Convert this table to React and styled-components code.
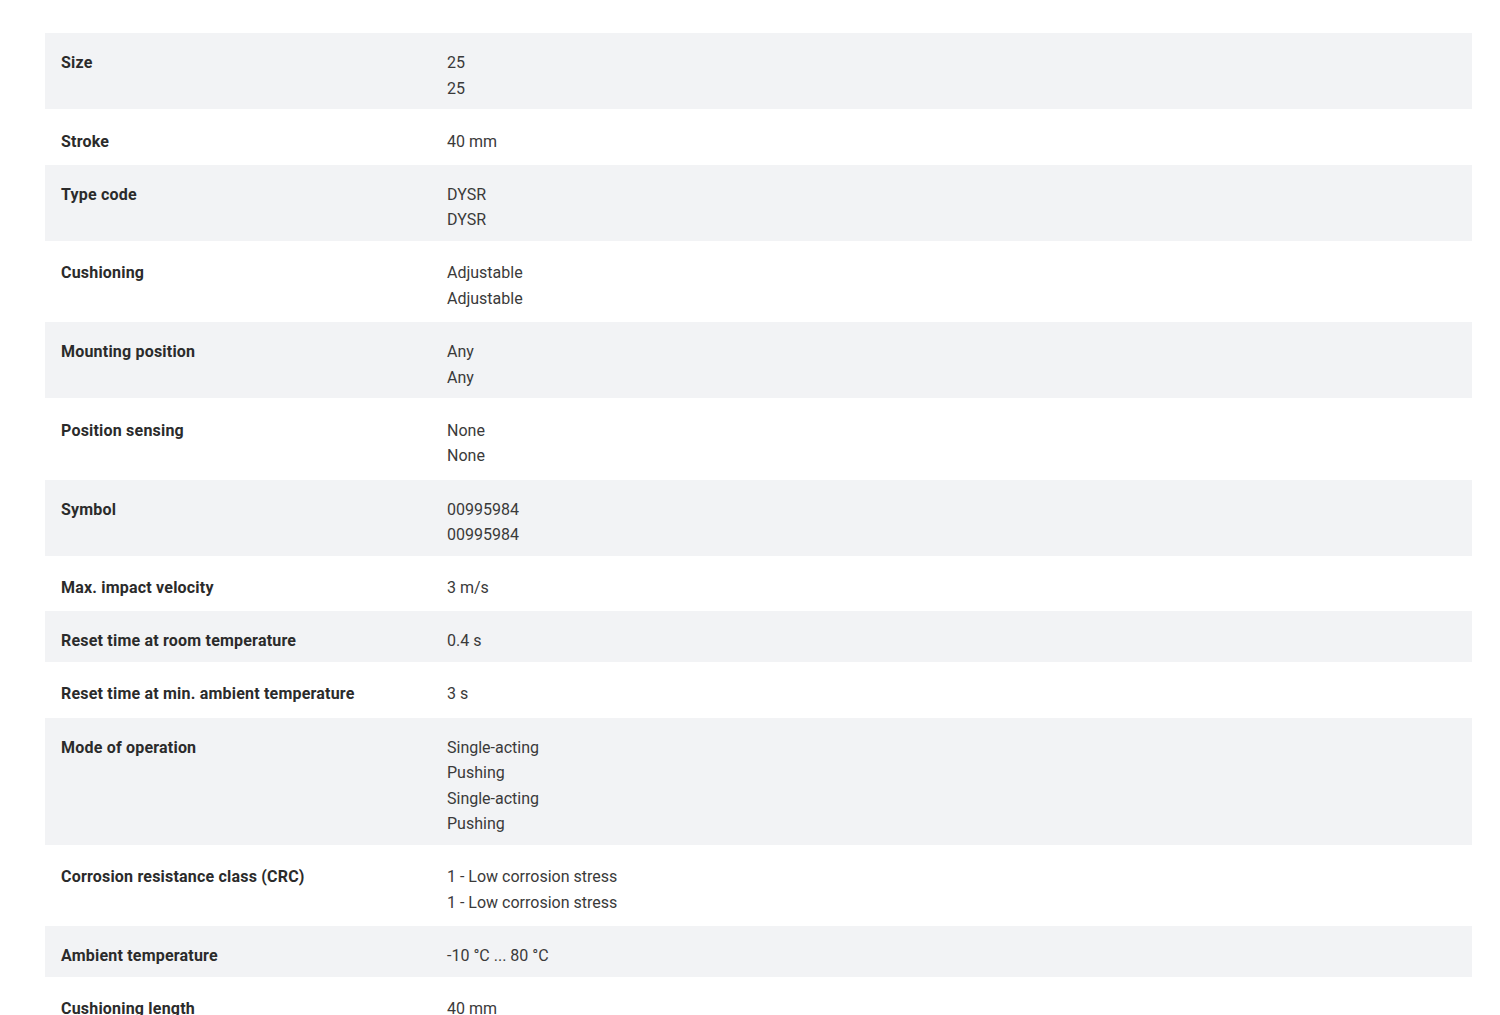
import React from 'react'
import styled, {createGlobalStyle} from 'styled-components'

const GlobalStyle = createGlobalStyle`
    body {
        margin: 0;
        background: #fff;
        font-family: Roboto, "Liberation Sans", sans-serif;
        color: #333;
    }
`

const Page = styled.div`
    padding: 33px 28px 0 45px;
`

const Table = styled.div`
    display: flex;
    flex-direction: column;
`

// shaded rows sit a little tighter than the white ones
const Row = styled.div`
    display: grid;
    grid-template-columns: 386px 1fr;
    padding: ${props => props.shaded ? '17px 16px 8px' : '19.5px 16px 10.5px'};
    background-color: ${props => props.shaded ? '#f2f3f5' : '#fff'};
`

const Label = styled.div`
    font-size: 16px;
    font-weight: 700;
    line-height: 25.6px;
    letter-spacing: 0.2px;
    color: #2b2b2b;
`

const Values = styled.div`
    display: flex;
    flex-direction: column;
`

const Value = styled.span`
    font-size: 16px;
    line-height: 25.6px;
    color: #3a3a3a;
`

const specs = [
    {label: 'Size', values: ['25', '25']},
    {label: 'Stroke', values: ['40 mm']},
    {label: 'Type code', values: ['DYSR', 'DYSR']},
    {label: 'Cushioning', values: ['Adjustable', 'Adjustable']},
    {label: 'Mounting position', values: ['Any', 'Any']},
    {label: 'Position sensing', values: ['None', 'None']},
    {label: 'Symbol', values: ['00995984', '00995984']},
    {label: 'Max. impact velocity', values: ['3 m/s']},
    {label: 'Reset time at room temperature', values: ['0.4 s']},
    {label: 'Reset time at min. ambient temperature', values: ['3 s']},
    {label: 'Mode of operation', values: ['Single-acting', 'Pushing', 'Single-acting', 'Pushing']},
    {label: 'Corrosion resistance class (CRC)', values: ['1 - Low corrosion stress', '1 - Low corrosion stress']},
    {label: 'Ambient temperature', values: ['-10 °C ... 80 °C']},
    {label: 'Cushioning length', values: ['40 mm']},
]

const App = () => {
    return(
        <Page>
            <GlobalStyle />
            <Table>
                {specs.map((spec, i) => (
                    <Row key={spec.label} shaded={i % 2 === 0}>
                        <Label>{spec.label}</Label>
                        <Values>
                            {spec.values.map((v, j) => <Value key={j}>{v}</Value>)}
                        </Values>
                    </Row>
                ))}
            </Table>
        </Page>
    )
}
export default App
